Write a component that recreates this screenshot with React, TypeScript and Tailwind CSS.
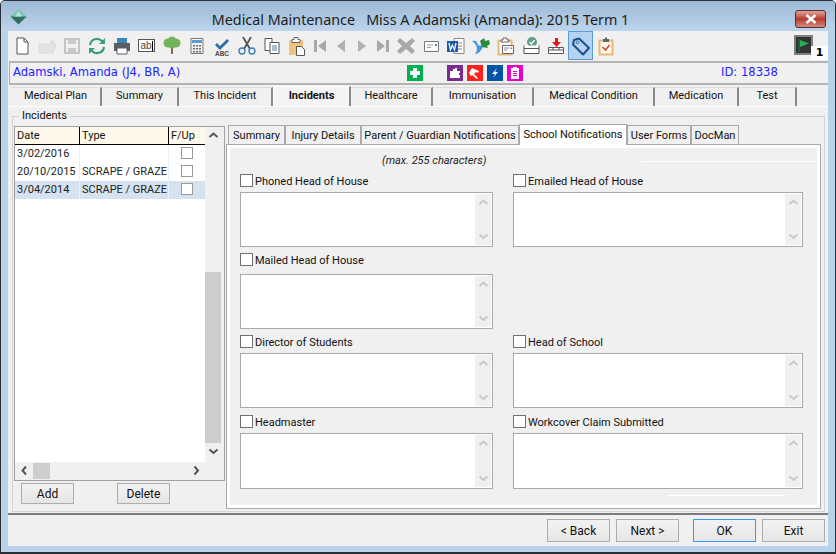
import React from 'react';

const mainTabs = [
    { label: 'Medical Plan', w: 'w-[91px]' },
    { label: 'Summary', w: 'w-[77px]' },
    { label: 'This Incident', w: 'w-[94px]' },
    { label: 'Incidents', w: 'w-[78px]', active: true },
    { label: 'Healthcare', w: 'w-[82px]' },
    { label: 'Immunisation', w: 'w-[101px]' },
    { label: 'Medical Condition', w: 'w-[121px]' },
    { label: 'Medication', w: 'w-[84px]' },
    { label: 'Test', w: 'w-[58px]' },
];

const subTabs = [
    { label: 'Summary', w: 'w-[57px]' },
    { label: 'Injury Details', w: 'w-[76px]' },
    { label: 'Parent / Guardian Notifications', w: 'w-[158px]' },
    { label: 'School Notifications', w: 'w-[108px]', active: true },
    { label: 'User Forms', w: 'w-[64px]' },
    { label: 'DocMan', w: 'w-[48px]' },
];

const incidents = [
    { date: '3/02/2016', type: '' },
    { date: '20/10/2015', type: 'SCRAPE / GRAZE' },
    { date: '3/04/2014', type: 'SCRAPE / GRAZE', selected: true },
];

function Ico({ children }: { children: React.ReactNode }) {
    return <svg width="20" height="20" viewBox="0 0 20 20">{children}</svg>;
}

const toolIcons: { w: string; selected?: boolean; icon: React.ReactNode }[] = [
    { w: 'w-[25px]', icon: <Ico><path d="M5 2h7l4 4v12H5z" fill="#fff" stroke="#555" /><path d="M12 2v4h4" fill="none" stroke="#555" /></Ico> },
    { w: 'w-[25px]', icon: <Ico><path d="M2 17V8h11l1-3h3v2l2 2-3 8z" fill="#e2e2e2" stroke="#dadada" /></Ico> },
    { w: 'w-[25px]', icon: <Ico><path d="M3 3h14v14H3z" fill="#f0f0f0" stroke="#c4c4c4" strokeWidth="2" /><path d="M6 3h8v5H6zM6 12h8v5H6z" fill="#c8c8c8" /></Ico> },
    { w: 'w-[25px]', icon: <Ico><path d="M3 9a7 7 0 0 1 12-4l2 2M17 11a7 7 0 0 1-12 4l-2-2" fill="none" stroke="#3c9b83" strokeWidth="2.2" /><path d="M18 2v6h-6zM2 18v-6h6z" fill="#3c9b83" /></Ico> },
    { w: 'w-[25px]', icon: <Ico><path d="M5 2h10v6H5z" fill="#3f86b8" /><path d="M2 7h16v8H2z" fill="#5a5f66" /><path d="M5 12h10v6H5z" fill="#fff" stroke="#5a5f66" /></Ico> },
    { w: 'w-[25px]', icon: <span className="w-[17px] h-[13px] border border-[#555] bg-white flex items-center justify-center text-[10px] leading-none text-[#444] font-['Liberation_Sans',sans-serif]">ab<span className="w-px h-[10px] bg-black" /></span> },
    { w: 'w-[25px]', icon: <Ico><path d="M9 11h2v7H9z" fill="#8a6a3a" /><circle cx="6" cy="7" r="4.500" fill="#73b35c" /><circle cx="14" cy="7" r="4.500" fill="#73b35c" /><circle cx="10" cy="5" r="4.500" fill="#73b35c" /><circle cx="10" cy="9" r="3.500" fill="#73b35c" /></Ico> },
    { w: 'w-[25px]', icon: <Ico><path d="M4 2.500h12v15H4z" fill="#f4f4f4" stroke="#777" /><path d="M5 4h10v3H5z" fill="#5a9bd0" /><path d="M6 9h2v1.500H6zM9 9h2v1.500H9zM12 9h2v1.500h-2zM6 12h2v1.500H6zM9 12h2v1.500H9zM12 12h2v1.500h-2zM6 15h2v1.500H6zM9 15h2v1.500H9zM12 15h2v1.500h-2z" fill="#666" /></Ico> },
    { w: 'w-[25px]', icon: <Ico><path d="M3 7l3 3 7-7 2 2-9 9-5-5z" fill="#2c6fa8" transform="translate(2 0)" /><text x="10" y="19.500" textAnchor="middle" fontSize="6.500" fontWeight="700" fill="#444" fontFamily="Liberation Sans">ABC</text></Ico> },
    { w: 'w-[25px]', icon: <Ico><path d="M6 1l7 12M14 1L7 13" stroke="#555" strokeWidth="1.800" /><circle cx="5" cy="15" r="3" fill="none" stroke="#3f7fb5" strokeWidth="1.400" /><circle cx="15" cy="15" r="3" fill="none" stroke="#3f7fb5" strokeWidth="1.400" /></Ico> },
    { w: 'w-[25px]', icon: <Ico><path d="M3 2.500h7v12H3z" fill="#fff" stroke="#555" /><path d="M8 6.500h9v11H8z" fill="#fff" stroke="#555" /><path d="M10 10h5M10 12h5M10 14h5" stroke="#4a7fa8" /></Ico> },
    { w: 'w-[25px]', icon: <Ico><path d="M2 4h14v15H2z" fill="#f1c27d" /><path d="M7 1.500h4v2h2v3H5v-3h2z" fill="#fff" stroke="#666" /><path d="M9.500 10.500h5l3 3v6h-8z" fill="#fff" stroke="#555" /></Ico> },
    { w: 'w-[21px]', icon: <Ico><path d="M4 4h3v12H4zM16 4v12L8 10z" fill="#a8a8a8" /></Ico> },
    { w: 'w-[21px]', icon: <Ico><path d="M14 4v12L6 10z" fill="#b0b0b0" /></Ico> },
    { w: 'w-[21px]', icon: <Ico><path d="M6 4v12l8-6z" fill="#b0b0b0" /></Ico> },
    { w: 'w-[21px]', icon: <Ico><path d="M4 4v12l8-6zM13 4h3v12h-3z" fill="#a8a8a8" /></Ico> },
    { w: 'w-[25px]', icon: <Ico><path d="M4 2l6 5 6-5 3 3-5 5 5 5-3 3-6-5-6 5-3-3 5-5-5-5z" fill="#a8a8a8" /></Ico> },
    { w: 'w-[25px]', icon: <Ico><path d="M3.500 5.500h14v10h-14z" fill="#fff" stroke="#777" /><path d="M6 9h6M6 11.500h4" stroke="#999" /><path d="M14 8h2v2h-2z" fill="#4a8fc0" /></Ico> },
    { w: 'w-[25px]', icon: <Ico><path d="M8 2.500h10v15H8z" fill="#fff" stroke="#888" /><path d="M11 7h5M11 10h5M11 13h5" stroke="#888" /><path d="M1 5h11v11H1z" fill="#1f5aa6" /><path d="M3 7l1.500 7 2-5 2 5L10 7" fill="none" stroke="#fff" strokeWidth="1.200" /></Ico> },
    { w: 'w-[25px]', icon: <Ico><path d="M1 5c5-1 9 1 11 6-3 5-5 7-8 7 3-3 3-9-3-13z" fill="#3e97e0" /><path d="M5 5c3 0 6 2 7 4-2 1-4 1-5 0z" fill="#dbeeff" /><path d="M9 5l4-3 1 3 4-1 1 4-3 2 1 2-6-1z" fill="#2d8a3a" /></Ico> },
    { w: 'w-[25px]', icon: <Ico><path d="M2.500 4.500h13v14h-13z" fill="#fff" stroke="#e8b878" strokeWidth="2" /><path d="M7 2h4v2h2v2H5V4h2z" fill="#fff" stroke="#666" /><path d="M6.500 9.500h11v8h-11z" fill="#fff" stroke="#666" /><path d="M8 12h5M8 14h3" stroke="#888" /><path d="M14.500 11.500h1.500v1.500h-1.500z" fill="#4a8fc0" /></Ico> },
    { w: 'w-[25px]', icon: <Ico><circle cx="11" cy="6" r="5" fill="#5f9e8f" /><path d="M8.500 6l2 2 3-4" fill="none" stroke="#fff" strokeWidth="1.400" /><path d="M3 9.500v8h15v-8M3 12.500h15" fill="#fff" stroke="#555" /></Ico> },
    { w: 'w-[25px]', icon: <Ico><path d="M9 2h3v4h3l-4.500 5L6 6h3z" fill="#e8141c" /><path d="M2.500 11.500h15v6h-15z" fill="#fff" stroke="#555" /><path d="M2.500 14h15M7 11.500V14M13 11.500V14" stroke="#555" /></Ico> },
    { w: 'w-[25px]', selected: true, icon: <Ico><path d="M3 4l5-1.500 10 9.500-6 6.500-10-10z" fill="#b5d3f0" stroke="#1d4f8c" strokeWidth="2" strokeLinejoin="round" /><circle cx="6.500" cy="6.500" r="1.200" fill="#fff" stroke="#1d4f8c" /></Ico> },
    { w: 'w-[25px]', icon: <Ico><path d="M3.500 4.500h13v14h-13z" fill="#fdf6ea" stroke="#e8b878" strokeWidth="2" /><path d="M7 3h2v-1.500h2V3h2v3H7z" fill="#666" /><path d="M6.500 11l3 3 4-5" fill="none" stroke="#c9502c" strokeWidth="1.700" /></Ico> },
];

function Badge({ bg, d }: { bg: string; d: string }) {
    return (
        <span className={`w-4 h-4 flex items-center justify-center ${bg}`}>
            <svg width="16" height="16" viewBox="0 0 16 16"><path d={d} fill="#fff" /></svg>
        </span>
    );
}

function Chevron({ dir, color = '#555' }: { dir: 'up' | 'down' | 'left' | 'right'; color?: string }) {
    const d = { up: 'M1.500 7L5.500 3.500 9.500 7', down: 'M1.500 3.500L5.500 7 9.500 3.500', left: 'M7 1.500L3.500 5.500 7 9.500', right: 'M3.500 1.500L7 5.500 3.500 9.500' }[dir];
    return <svg width="11" height="11" viewBox="0 0 11 11"><path d={d} fill="none" stroke={color} strokeWidth="2" /></svg>;
}

function Check({ box = 'border-[#707070]', size = 'w-[13px] h-[13px]' }: { box?: string; size?: string }) {
    return <span className={`bg-white border shrink-0 block ${size} ${box}`} />;
}

function Field({ label, width, height, gap }: { label: string; width: string; height: string; gap: string }) {
    return (
        <div className={`flex flex-col ${width}`}>
            <label className={`flex items-center gap-[2px] h-[13px] ${gap}`}>
                <Check />
                <span className="text-[11px] leading-[13px] pt-[2px] text-[#111]">{label}</span>
            </label>
            <div className={`bg-white border border-[#a9a9a9] flex justify-end p-px ${height}`}>
                <div className="w-[16px] bg-[#f0f0f0] flex flex-col justify-between items-center py-[3px]">
                    <Chevron dir="up" color="#c8c8c8" />
                    <Chevron dir="down" color="#c8c8c8" />
                </div>
            </div>
        </div>
    );
}

function DlgButton({ label, w = 'w-[63px]', h = 'h-[23px]', cls = 'border-[#adadad]' }: { label: string; w?: string; h?: string; cls?: string }) {
    return (
        <button className={`${w} ${h} border ${cls} bg-gradient-to-b from-[#f2f2f2] to-[#e6e6e6] text-[12px] text-[#111]`}>
            {label}
        </button>
    );
}

export default function App() {
    return (
        <div className="w-[836px] h-[554px] flex flex-col bg-[#b9d2eb] border border-[#2a2f33] border-b-2 rounded-t-[5px] font-['Roboto',sans-serif] overflow-hidden">
            {/* Title bar */}
            <div className="h-[30px] flex items-center pl-[9px] pr-[9px] bg-gradient-to-b from-[#9db9d6] to-[#bdd4ec]">
                <svg width="17" height="17" viewBox="0 0 17 17">
                    <path d="M8.500 0.500L16.500 8.500 8.500 16.500 0.500 8.500z" fill="#7fc7b4" />
                    <path d="M8.500 8.500L16.500 8.500 8.500 16.500 0.500 8.500z" fill="#2f6f62" />
                    <path d="M8.500 3L12 8.500H5z" fill="#b5e3d6" />
                </svg>
                <div className="flex-1 text-center font-['Noto_Sans',sans-serif] text-[14.300px] text-[#1c1c1c] whitespace-pre pt-[7px] pl-[19px]">
                    Medical Maintenance   Miss A Adamski (Amanda): 2015 Term 1
                </div>
                <button className="w-[31px] h-[18px] mt-[6px] flex items-center justify-center rounded-[3px] border border-[#5d2b27] bg-gradient-to-b from-[#dca59d] via-[#b83a2b] to-[#cf8a80]">
                    <svg width="12" height="10" viewBox="0 0 12 10"><path d="M1.500 1l9 8M10.500 1l-9 8" stroke="#fff" strokeWidth="2.600" /></svg>
                </button>
            </div>

            {/* Client area */}
            <div className="mx-[7px] h-[515px] bg-[#f0f0f0] flex flex-col">
                {/* Toolbar */}
                <div className="h-[29px] flex items-stretch pl-px relative shrink-0">
                    {toolIcons.map((t, i) => (
                        <span key={i} className={`${t.w} flex items-center justify-center ${t.selected ? 'bg-[#b5d3f0] border border-[#5b9bd5]' : ''}`}>
                            {t.icon}
                        </span>
                    ))}
                    <span className="ml-auto mr-[15px] mt-[4px] w-[19px] h-[20px] border-2 border-[#808080] bg-[#333] flex items-center justify-center">
                        <svg width="13" height="13" viewBox="0 0 13 13"><path d="M2 0v13" stroke="#1d7a3a" /><path d="M3 1l9 3.500-9 3.500z" fill="#22b14c" /></svg>
                    </span>
                    <span className="absolute right-0 top-[15px] w-[17px] h-[14px] bg-white text-[11px] leading-[14px] font-bold text-center text-black font-['DejaVu_Sans',sans-serif]">1</span>
                </div>

                {/* Patient bar */}
                <div className="h-[24px] mt-px ml-px mr-0 border-y-2 border-l border-[#a8a8a8] border-y-[#b4b4b4] flex items-center shrink-0 relative font-['DejaVu_Sans',sans-serif] text-[#2222ff]">
                    <span className="ml-[3px] w-[394px] text-[11.600px]">Adamski, Amanda (J4, BR, A)</span>
                    <Badge bg="bg-[#00b050]" d="M6 3h4v3h3v4h-3v3H6v-3H3V6h3z" />
                    <span className="w-6" />
                    <span className="flex gap-1">
                        <Badge bg="bg-[#7b2a90]" d="M3 6h3V4h2v-1h2v3h3v2h-1v2h1v3H3z" />
                        <Badge bg="bg-[#ff2020]" d="M5 3l7 3-1 2-2-1-2 2 4 4-1 1-5-4-1 1-2-3z" />
                        <Badge bg="bg-[#0053a6]" d="M10 3L5 9h3l-2 4 5-6H8z" />
                        <Badge bg="bg-[#e600c8]" d="M4 3h2V2h4v1h2v11H4zM6 6v1h4V6zM6 8v1h4V8zM6 10v1h4v-1z" />
                    </span>
                    <span className="ml-[198px] text-[11.600px]">ID: 18338</span>
                </div>

                {/* Main tabs */}
                <div className="h-[20px] mt-[1px] pl-[3px] flex items-stretch shrink-0">
                    {mainTabs.map(t => (
                        <div
                            key={t.label}
                            className={`${t.w} flex items-center justify-center text-[11px] text-[#111] border-r-2 border-r-[#8a8a8a] ${t.active ? 'font-bold bg-[#f4f4f4] border-t border-l border-t-white border-l-white' : 'border-t border-t-[#dedede] mt-px pb-px'}`}
                        >
                            {t.label}
                        </div>
                    ))}
                </div>

                {/* Tab content */}
                <div className="h-[408px] border-t border-white shrink-0 pt-[9px] pl-[4px] pr-[3px]">
                    <div className="relative h-[396px] border border-[#d4d4d4] flex pl-[1px] pr-[3px] pt-[9px]">
                        <span className="absolute left-[6px] -top-[8px] bg-[#f0f0f0] px-[3px] text-[11px] leading-[14px] text-[#111]">Incidents</span>

                        {/* Incident list */}
                        <div className="w-[211px] shrink-0 flex flex-col">
                            <div className="h-[355px] border border-[#a0a0a0] flex flex-col">
                                <div className="flex-1 flex min-h-0">
                                    <div className="w-[190px] bg-white flex flex-col">
                                        <div className="h-[18px] flex bg-[#fdf8ea] border-b border-black text-[11px] leading-[18px] text-[#111]">
                                            <span className="w-[65px] pl-[2px] border-r border-black">Date</span>
                                            <span className="w-[89px] pl-[2px] border-r border-black">Type</span>
                                            <span className="flex-1 pl-[2px]">F/Up</span>
                                        </div>
                                        {incidents.map(r => (
                                            <div key={r.date} className={`h-[18px] flex text-[11px] leading-[17px] text-[#222] ${r.selected ? 'bg-[#d5e3f0]' : ''}`}>
                                                <span className="w-[65px] pl-[2px] border-r border-[#e4f1fb]">{r.date}</span>
                                                <span className="w-[89px] pl-[2px] border-r border-[#e4f1fb] whitespace-nowrap">{r.type}</span>
                                                <span className="flex-1 flex justify-center items-center pb-[2px]"><Check box="border-[#9a9a9a]" size="w-[12px] h-[12px]" /></span>
                                            </div>
                                        ))}
                                    </div>
                                    <div className="flex-1 flex flex-col items-center pr-[3px] pt-[3px]">
                                        <Chevron dir="up" />
                                        <div className="w-full mt-[131px] h-[171px] bg-[#cdcdcd]" />
                                        <div className="mt-[3px]"><Chevron dir="down" /></div>
                                    </div>
                                </div>
                                <div className="h-[17px] mb-[1px] flex items-center">
                                    <span className="ml-[4px]"><Chevron dir="left" /></span>
                                    <span className="ml-[3px] w-[17px] h-[16px] bg-[#cdcdcd]" />
                                    <span className="ml-[141px]"><Chevron dir="right" /></span>
                                </div>
                            </div>
                            <div className="flex pl-[7px] pt-[2px] gap-[43px]">
                                <DlgButton label="Add" w="w-[53px]" h="h-[21px]" />
                                <DlgButton label="Delete" w="w-[53px]" h="h-[21px]" />
                            </div>
                        </div>

                        {/* School notification tabs */}
                        <div className="flex-1 flex flex-col -mt-[2px] ml-px">
                            <div className="h-[20px] flex items-end pl-[2px] shrink-0 relative">
                                {subTabs.map(t => (
                                    <div
                                        key={t.label}
                                        className={`${t.w} flex items-center justify-center whitespace-nowrap text-[11px] text-[#111] border border-[#a9a9a9] border-b-0 ${t.active ? 'h-[21px] bg-white relative z-10 -mb-px' : 'h-[19px] bg-[#f0f0f0] pt-[3px]'}`}
                                    >
                                        {t.label}
                                    </div>
                                ))}
                            </div>
                            <div className="h-[365px] border border-[#a9a9a9] bg-[#f0f0f0]">
                                <div className="h-full border-[3px] border-white pl-[10px] pt-[6px]">
                                    <div className="h-[14px] flex items-center">
                                        <span className="ml-[142px] w-[260px] text-[11px] italic text-[#222]">(max. 255 characters)</span>
                                        <span className="h-px w-[173px] bg-white" />
                                    </div>
                                    <div className="mt-[6px] flex gap-[20px]">
                                        <Field label="Phoned Head of House" width="w-[253px]" height="h-[55px]" gap="mb-[5px]" />
                                        <Field label="Emailed Head of House" width="w-[290px]" height="h-[55px]" gap="mb-[5px]" />
                                    </div>
                                    <div className="mt-[6px] flex gap-[20px]">
                                        <Field label="Mailed Head of House" width="w-[253px]" height="h-[55px]" gap="mb-[8px]" />
                                    </div>
                                    <div className="mt-[6px] flex gap-[20px]">
                                        <Field label="Director of Students" width="w-[253px]" height="h-[55px]" gap="mb-[5px]" />
                                        <Field label="Head of School" width="w-[290px]" height="h-[55px]" gap="mb-[5px]" />
                                    </div>
                                    <div className="mt-[7px] flex gap-[20px]">
                                        <Field label="Headmaster" width="w-[253px]" height="h-[56px]" gap="mb-[5px]" />
                                        <Field label="Workcover Claim Submitted" width="w-[290px]" height="h-[56px]" gap="mb-[5px]" />
                                    </div>
                                    <div className="mt-[6px] ml-[427px] h-px w-[118px] bg-white" />
                                </div>
                            </div>
                        </div>
                    </div>
                </div>

                {/* Footer */}
                <div className="h-[2px] bg-[#7a7a7a] shrink-0 -mt-[1px]" />
                <div className="flex-1 flex pl-[539px] pt-[4px]">
                    <DlgButton label="< Back" />
                    <span className="w-[6px]" />
                    <DlgButton label="Next >" />
                    <span className="w-[14px]" />
                    <DlgButton label="OK" cls="border-[#3399ff]" />
                    <span className="w-[6px]" />
                    <DlgButton label="Exit" />
                </div>
            </div>
        </div>
    );
}
